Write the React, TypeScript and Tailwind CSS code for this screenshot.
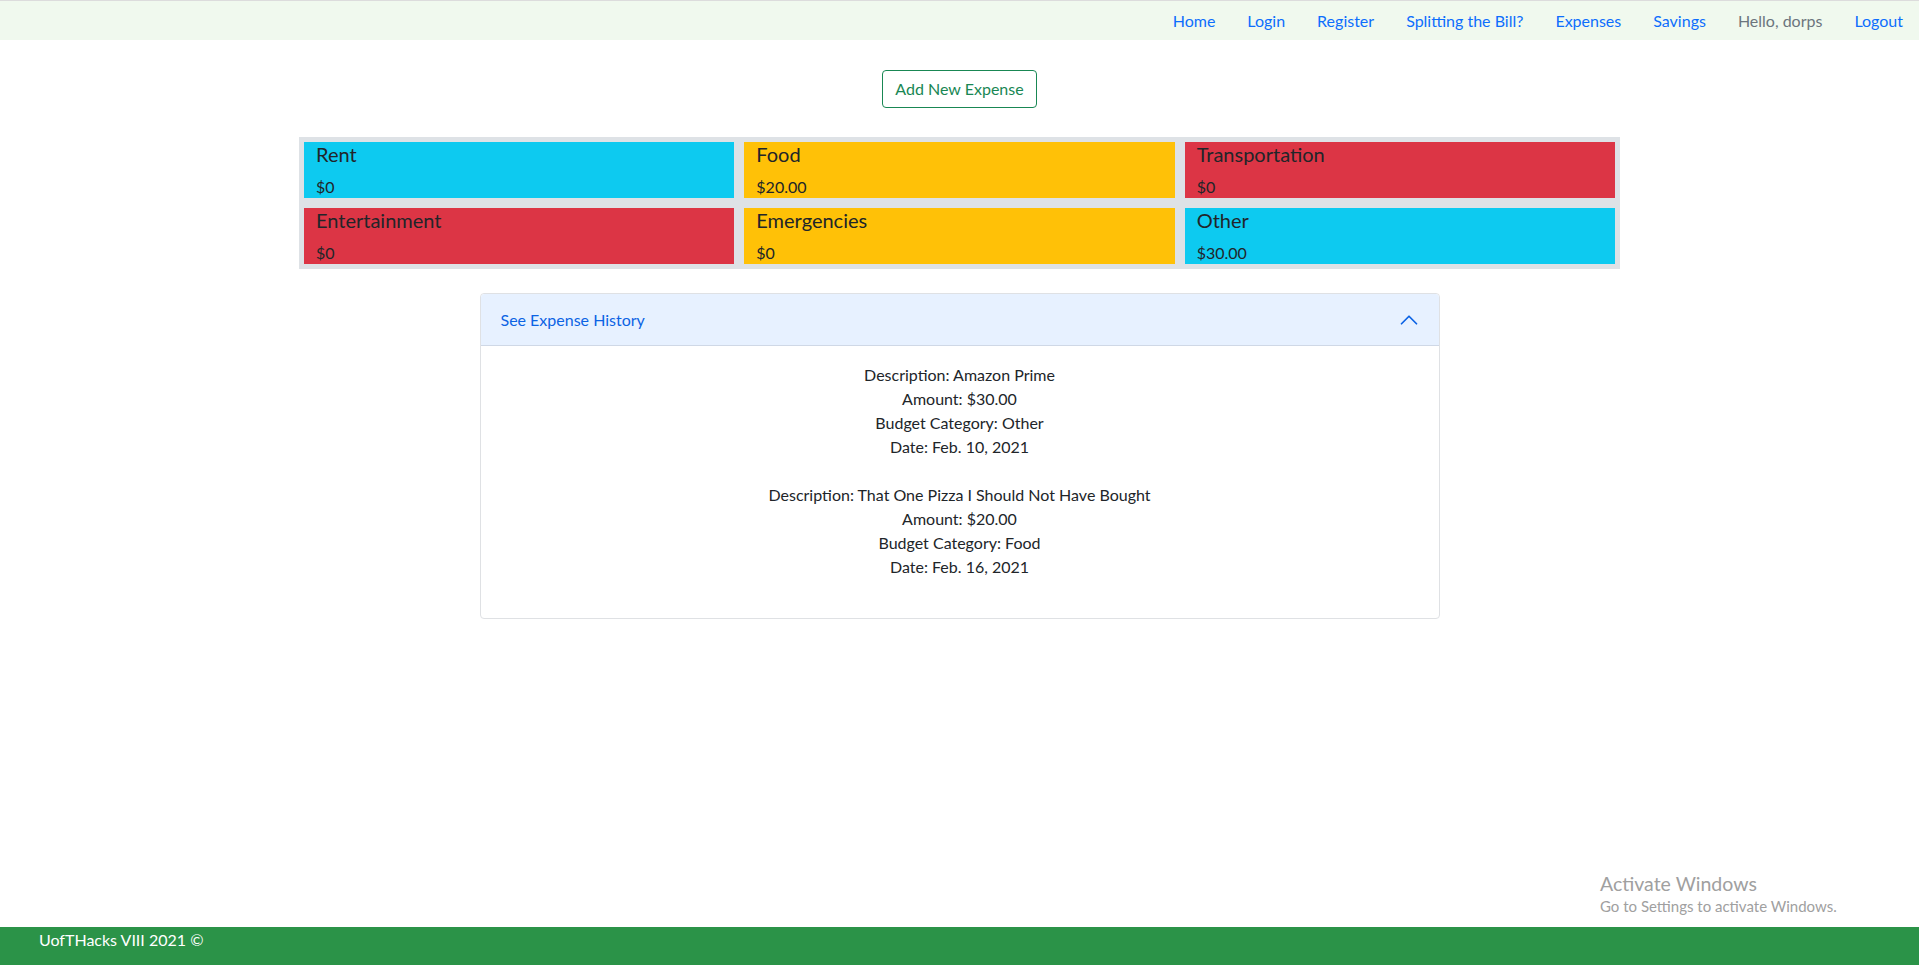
import { useState } from "react";

const links = ["Home", "Login", "Register", "Splitting the Bill?", "Expenses", "Savings"];

const budgets = [
  { name: "Rent", amount: "$0", color: "bg-[#0dcaf0]" },
  { name: "Food", amount: "$20.00", color: "bg-[#ffc107]" },
  { name: "Transportation", amount: "$0", color: "bg-[#dc3545]" },
  { name: "Entertainment", amount: "$0", color: "bg-[#dc3545]" },
  { name: "Emergencies", amount: "$0", color: "bg-[#ffc107]" },
  { name: "Other", amount: "$30.00", color: "bg-[#0dcaf0]" },
];

const expenses = [
  { description: "Amazon Prime", amount: "$30.00", category: "Other", date: "Feb. 10, 2021" },
  {
    description: "That One Pizza I Should Not Have Bought",
    amount: "$20.00",
    category: "Food",
    date: "Feb. 16, 2021",
  },
];

const ChevronUp = () => (
  <svg width="20" height="20" viewBox="0 0 16 16" fill="none">
    <path
      d="M2 11 L8 5 L14 11"
      stroke="#0c63e4"
      strokeWidth="1.4"
      strokeLinecap="round"
      strokeLinejoin="round"
    />
  </svg>
);

export default function App() {
  const [open, setOpen] = useState(true);

  return (
    <div className="relative flex min-h-[965px] flex-col bg-white font-['Lato','Liberation_Sans',sans-serif] text-base text-[#212529]">
      <nav className="flex h-10 items-center justify-end border-t border-[#dcdcdc] bg-[#f0f9ee]">
        <ul className="flex items-center">
          {links.map((l) => (
            <li key={l}>
              <a href="#" className="block px-4 py-2 leading-6 text-[#0d6efd]">
                {l}
              </a>
            </li>
          ))}
          <li className="px-4 py-2 leading-6 text-[#6c757d]">Hello, dorps</li>
          <li>
            <a href="#" className="block px-4 py-2 leading-6 text-[#0d6efd]">
              Logout
            </a>
          </li>
        </ul>
      </nav>

      <main className="flex flex-1 flex-col items-center">
        <button className="mt-[30px] h-[38px] rounded border border-[#198754] px-3 leading-6 text-[#198754]">
          Add New Expense
        </button>

        <div className="mt-[29px] grid w-[1321px] grid-cols-3 gap-[10px] bg-[#dee2e6] p-[5px]">
          {budgets.map((b) => (
            <div key={b.name} className={`h-[56px] pl-3 ${b.color}`}>
              <h5 className="mb-[11px] text-xl leading-6">{b.name}</h5>
              <p className="leading-5">{b.amount}</p>
            </div>
          ))}
        </div>

        <div className="mt-[24px] w-[960px] rounded border border-[#dfe1e4]">
          <button
            onClick={() => setOpen(!open)}
            className="flex h-[52px] w-full items-center justify-between rounded-t border-b border-[#cfd8e6] bg-[#e7f1ff] px-5 text-left leading-6 text-[#0c63e4]"
          >
            <span>See Expense History</span>
            <ChevronUp />
          </button>
          {open && (
            <div className="px-5 pb-[15px] pt-[17px] text-center leading-6">
              {expenses.map((e) => (
                <div key={e.description} className="mb-6">
                  <div>Description: {e.description}</div>
                  <div>Amount: {e.amount}</div>
                  <div>Budget Category: {e.category}</div>
                  <div>Date: {e.date}</div>
                </div>
              ))}
            </div>
          )}
        </div>
      </main>

      <div className="pointer-events-none absolute left-[1600px] top-[872px] text-[#a0a0a0]">
        <div className="text-[19.5px] leading-6">Activate Windows</div>
        <div className="text-[15px] leading-5">Go to Settings to activate Windows.</div>
      </div>

      <footer className="h-[38px] bg-[#2b9348] pl-[39px] pt-[1px] leading-6 text-white">
        UofTHacks VIII 2021 ©
      </footer>
    </div>
  );
}
